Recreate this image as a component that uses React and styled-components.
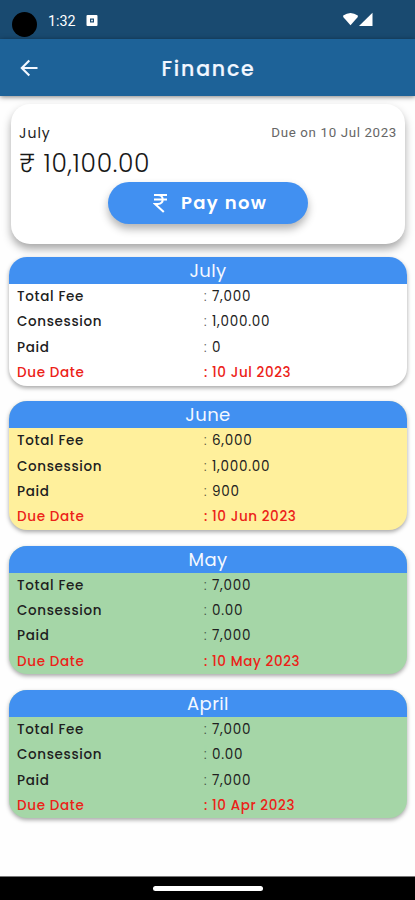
import React from "react";
import styled, { createGlobalStyle } from "styled-components";

const GlobalStyle = createGlobalStyle`
  * { box-sizing: border-box; }
  body { margin: 0; background: #fefefe; font-family: Poppins, Inter, sans-serif; }
`;

const Screen = styled.div`
  width: 415px;
  height: 900px;
  display: flex;
  flex-direction: column;
  overflow: hidden;
  background: #fefefe;
`;

const StatusBar = styled.div`
  height: 39px;
  flex: none;
  display: flex;
  align-items: center;
  padding: 2px 41px 0 12px;
  background: #194a70;
  color: #fff;
`;

const Camera = styled.span`
  width: 25px;
  height: 25px;
  margin-top: 8px;
  border-radius: 50%;
  background: #000;
`;

const Clock = styled.span`
  margin-left: 11px;
  width: 38px;
  padding-top: 1px;
  font: 400 14.3px/20px Roboto, sans-serif;
`;

const Signals = styled.div`
  display: flex;
  margin-left: auto;
  margin-top: -2px;
`;

const AppBar = styled.header`
  height: 57px;
  flex: none;
  display: grid;
  grid-template-columns: 58px 1fr 58px;
  align-items: center;
  background: #1d6298;
  box-shadow: 0 1px 5px rgba(0, 0, 0, 0.5);
`;

const BackButton = styled.button`
  display: flex;
  padding: 0 0 0 20px;
  border: 0;
  background: none;
`;

const Title = styled.h1`
  margin: 0;
  padding: 1px 0 0 2px;
  text-align: center;
  font-size: 20.5px;
  font-weight: 500;
  letter-spacing: 1.8px;
  color: #f2f7ff;
  -webkit-text-stroke: 0.2px currentColor;
`;

const Content = styled.main`
  flex: 1;
  padding: 8px 8px 0 9px;
`;

const Summary = styled.section`
  height: 140px;
  margin: 0 2px 13px;
  padding: 18px 8px 0;
  display: flex;
  flex-direction: column;
  border-radius: 19px;
  background: #fff;
  box-shadow: 0 5px 9px rgba(0, 0, 0, 0.34);
`;

const SummaryTop = styled.div`
  display: flex;
  justify-content: space-between;
  align-items: center;
  height: 22px;
`;

const SummaryMonth = styled.span`
  font-size: 14px;
  letter-spacing: 1px;
  color: #222;
`;

const DueOn = styled.span`
  font: 400 13.3px/20px Roboto, sans-serif;
  letter-spacing: 0.65px;
  color: #666;
`;

const Amount = styled.div`
  height: 38px;
  line-height: 40px;
  font-size: 25px;
  font-weight: 300;
  letter-spacing: 0.7px;
  color: #181818;
`;

const PayButton = styled.button`
  align-self: center;
  width: 200px;
  height: 42px;
  display: flex;
  align-items: center;
  padding: 0 0 0 45px;
  border: 0;
  border-radius: 21px;
  background: #4190f1;
  box-shadow: 0 5px 8px rgba(0, 0, 0, 0.3);
  color: #fff;
  font: 600 18px/42px Poppins, Inter, sans-serif;
  letter-spacing: 1.35px;
`;

const PayLabel = styled.span`
  margin-left: 13px;
`;

const FeeCard = styled.section`
  height: 128.5px;
  margin-bottom: 15.8px;
  border-radius: 18px;
  overflow: hidden;
  background: ${(p) => p.$color};
  box-shadow: 0 2px 4px rgba(0, 0, 0, 0.35);
`;

const FeeHeader = styled.h2`
  height: 27px;
  margin: 0;
  line-height: 27px;
  text-align: center;
  font-size: 18px;
  font-weight: 400;
  letter-spacing: 0.4px;
  color: #f4f8ff;
  background: #4190f1;
`;

const Row = styled.div`
  display: grid;
  grid-template-columns: 187px 8px 1fr;
  align-items: center;
  height: 25.3px;
  padding: 1px 0 0 8px;
  font-size: 13.5px;
  color: ${(p) => (p.$due ? "#ec2218" : "#202020")};
`;

const Label = styled.span`
  font-weight: 500;
  letter-spacing: 0.65px;
`;

const Colon = styled.span`
  font-weight: ${(p) => (p.$due ? 500 : 300)};
  opacity: ${(p) => (p.$due ? 1 : 0.75)};
`;

const Value = styled.span`
  font-weight: ${(p) => (p.$due ? 500 : 400)};
  letter-spacing: ${(p) => (p.$due ? "0.6px" : "0.75px")};
`;

const NavBar = styled.div`
  height: 24px;
  flex: none;
  display: flex;
  justify-content: center;
  padding-top: 9px;
  border-top: 1px solid #777;
  background: #000;
`;

const HomeHandle = styled.span`
  width: 110px;
  height: 5px;
  border-radius: 3px;
  background: #fff;
`;

const months = [
  { name: "July", color: "#fff", total: "7,000", concession: "1,000.00", paid: "0", due: "10 Jul 2023" },
  { name: "June", color: "#fff09c", total: "6,000", concession: "1,000.00", paid: "900", due: "10 Jun 2023" },
  { name: "May", color: "#a5d6a7", total: "7,000", concession: "0.00", paid: "7,000", due: "10 May 2023" },
  { name: "April", color: "#a5d6a7", total: "7,000", concession: "0.00", paid: "7,000", due: "10 Apr 2023" },
];

function FeeRow({ label, value, due }) {
  return (
    <Row $due={due}>
      <Label>{label}</Label>
      <Colon $due={due}>:</Colon>
      <Value $due={due}>{value}</Value>
    </Row>
  );
}

export default function App() {
  return (
    <Screen>
      <GlobalStyle />
      <StatusBar>
        <Camera />
        <Clock>1:32</Clock>
        <svg width="12" height="12" viewBox="0 0 12 12">
          <rect x="0.5" y="0" width="11" height="11" rx="1" fill="#fff" />
          <rect x="4" y="3.5" width="4" height="4" fill="#194a70" />
          <rect x="5.2" y="4.7" width="1.6" height="1.6" fill="#fff" />
        </svg>
        <Signals>
          <svg width="32" height="15" viewBox="0 0 32 15" fill="#fff">
            <path d="M1.2 3.6Q8.5-1.8 15.8 3.6V5L8.5 13.3L1.2 5Z" />
            <path d="M17 14H30.5V0.8Z" />
          </svg>
        </Signals>
      </StatusBar>
      <AppBar>
        <BackButton aria-label="Back">
          <svg width="18" height="18" viewBox="0 0 18 18" fill="none" stroke="#f2f7ff" strokeWidth="2.1">
            <path d="M17.5 9H2.2M9.3 1.5L1.8 9L9.3 16.5" />
          </svg>
        </BackButton>
        <Title>Finance</Title>
      </AppBar>
      <Content>
        <Summary>
          <SummaryTop>
            <SummaryMonth>July</SummaryMonth>
            <DueOn>Due on 10 Jul 2023</DueOn>
          </SummaryTop>
          <Amount>₹ 10,100.00</Amount>
          <PayButton>
            <svg width="15" height="20" viewBox="0 0 15 20" fill="none" stroke="#fff" strokeWidth="2.1">
              <path d="M1 2H14M1 6.5H14M1 2H5C11.3 2 11.3 11 5 11H2L10.8 19" />
            </svg>
            <PayLabel>Pay now</PayLabel>
          </PayButton>
        </Summary>
        {months.map((m) => (
          <FeeCard key={m.name} $color={m.color}>
            <FeeHeader>{m.name}</FeeHeader>
            <FeeRow label="Total Fee" value={m.total} />
            <FeeRow label="Consession" value={m.concession} />
            <FeeRow label="Paid" value={m.paid} />
            <FeeRow label="Due Date" value={m.due} due />
          </FeeCard>
        ))}
      </Content>
      <NavBar>
        <HomeHandle />
      </NavBar>
    </Screen>
  );
}
